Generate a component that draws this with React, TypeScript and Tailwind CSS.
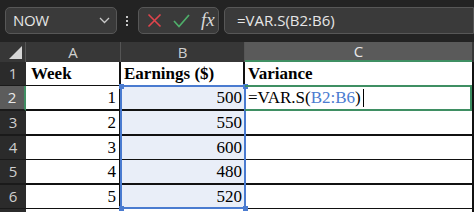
import React from "react";

const rowHeights = ["h-[24px]", "h-[25px]", "h-[25px]", "h-[24px]", "h-[25px]", "h-[24px]"];

const rows = [
  { a: "Week", b: "Earnings ($)", head: true },
  { a: "1", b: "500" },
  { a: "2", b: "550" },
  { a: "3", b: "600" },
  { a: "4", b: "480" },
  { a: "5", b: "520" },
];

function Handle({ className }: { className: string }) {
  return <div className={`absolute w-[5px] h-[5px] bg-[#4a7bd0] ${className}`} />;
}

export default function App() {
  return (
    <div className="w-[474px] h-[212px] overflow-hidden bg-[#232323] font-['Open_Sans',sans-serif]">
      {/* formula bar */}
      <div className="h-[42px] flex items-start pt-[7px] pl-[5px]">
        <div className="w-[116px] h-[27px] rounded-[5px] bg-[#3a3a3a] border border-[#575757] flex items-center justify-between pl-[7px] pr-[6px]">
          <span className="text-[15px] text-[#e6e6e6] tracking-tight">NOW</span>
          <svg width="11" height="7" viewBox="0 0 11 7" fill="none">
            <path d="M1 1l4.5 4.5L10 1" stroke="#c8c8c8" strokeWidth="1.3" />
          </svg>
        </div>
        <div className="w-[22px] h-[27px] flex flex-col items-center justify-center gap-[2px]">
          <div className="w-[2px] h-[2px] bg-[#c8c8c8]" />
          <div className="w-[2px] h-[2px] bg-[#c8c8c8]" />
          <div className="w-[2px] h-[2px] bg-[#c8c8c8]" />
        </div>
        <div className="w-[84px] h-[27px] rounded-[5px] bg-[#3a3a3a] border border-[#575757] flex items-center pl-[8px] gap-[11px]">
          <svg width="15" height="15" viewBox="0 0 15 15" fill="none">
            <path d="M1.5 1.5l12 12M13.5 1.5l-12 12" stroke="#e0444c" strokeWidth="1.6" />
          </svg>
          <svg width="17" height="14" viewBox="0 0 17 14" fill="none">
            <path d="M1 7l5 5.5L16 1" stroke="#4fae6a" strokeWidth="1.7" />
          </svg>
          <span className="font-['Liberation_Serif',serif] italic text-[19px] text-[#d8d8d8] leading-none -mt-[2px]">fx</span>
        </div>
        <div className="ml-[5px] w-[260px] h-[27px] rounded-l-[5px] bg-[#3a3a3a] border border-[#575757] flex items-center pl-[12px]">
          <span className="text-[15px] text-[#e6e6e6]">=VAR.S(B2:B6)</span>
        </div>
      </div>

      {/* sheet */}
      <div className="relative">
        <div className="grid grid-cols-[26px_95px_124px_227px_2px] h-[20px] bg-[#373737] text-[15px] text-[#cfcfcf]">
          <div className="relative border-r border-[#555]">
            <svg className="absolute right-[3px] bottom-[3px]" width="13" height="13" viewBox="0 0 13 13">
              <path d="M13 0v13H0z" fill="#d6d6d6" />
            </svg>
          </div>
          <div className="flex items-center justify-center border-r border-[#555] leading-none">A</div>
          <div className="flex items-center justify-center border-r border-[#555] leading-none">B</div>
          <div className="flex items-center justify-center bg-[#5a5a5a] border-b-2 border-[#3f8f63] leading-none text-[#e8e8e8]">C</div>
          <div className="bg-[#373737]" />
        </div>

        {rows.map((r, i) => (
          <div key={i} className={`grid grid-cols-[26px_95px_124px_227px_2px] ${rowHeights[i]}`}>
            <div
              className={`flex items-center justify-center text-[15px] border-b-2 border-[#1a1a1a] ${
                i === 1 ? "bg-[#5c5c5c] text-[#e8e8e8] border-r-2 border-r-[#3f8f63]" : "bg-[#2b2b2b] text-[#cfcfcf]"
              }`}
            >
              {i + 1}
            </div>
            <div
              className={`bg-white border-b-2 border-r-2 border-[#111] flex items-center font-['Liberation_Serif',serif] text-[17px] text-black leading-none px-[3px] ${
                r.head ? "font-bold justify-start pl-[5px]" : "justify-end"
              }`}
            >
              {r.a}
            </div>
            <div
              className={`border-b-2 border-[#111] flex items-center font-['Liberation_Serif',serif] text-[17px] text-black leading-none px-[3px] ${
                r.head ? "bg-white font-bold justify-start border-r-2" : "bg-[#e9eef8] justify-end"
              }`}
            >
              {r.b}
            </div>
            <div className="bg-white border-b-2 border-[#111] flex items-center font-['Liberation_Serif',serif] text-[17px] text-black leading-none px-[3px]">
              {r.head ? (
                <span className="font-bold">Variance</span>
              ) : i === 1 ? (
                <span className="flex items-center">
                  =VAR.S(<span className="text-[#4a7bd0]">B2:B6</span>)
                  <span className="inline-block w-[1px] h-[18px] bg-black ml-[2px]" />
                </span>
              ) : null}
            </div>
            <div className="bg-[#111]" />
          </div>
        ))}
        <div className="grid grid-cols-[26px_95px_124px_227px_2px] h-[10px]">
          <div className="bg-[#2b2b2b]" />
          <div className="bg-white" />
          <div className="bg-white" />
          <div className="bg-white" />
          <div className="bg-[#111]" />
        </div>

        {/* selection B2:B6 */}
        <div className="absolute left-[120px] top-[43px] w-[126px] h-[124px] border-2 border-[#4a7bd0] pointer-events-none">
          <Handle className="-left-[3.5px] -top-[3.5px]" />
          <Handle className="-right-[3.5px] -top-[3.5px]" />
          <Handle className="-left-[3.5px] -bottom-[3.5px]" />
          <Handle className="-right-[3.5px] -bottom-[3.5px]" />
        </div>
        {/* active cell C2 */}
        <div className="absolute left-[245px] top-[43px] w-[227px] h-[26px] border-2 border-l-0 border-[#3f8f63] pointer-events-none" />
      </div>
    </div>
  );
}
